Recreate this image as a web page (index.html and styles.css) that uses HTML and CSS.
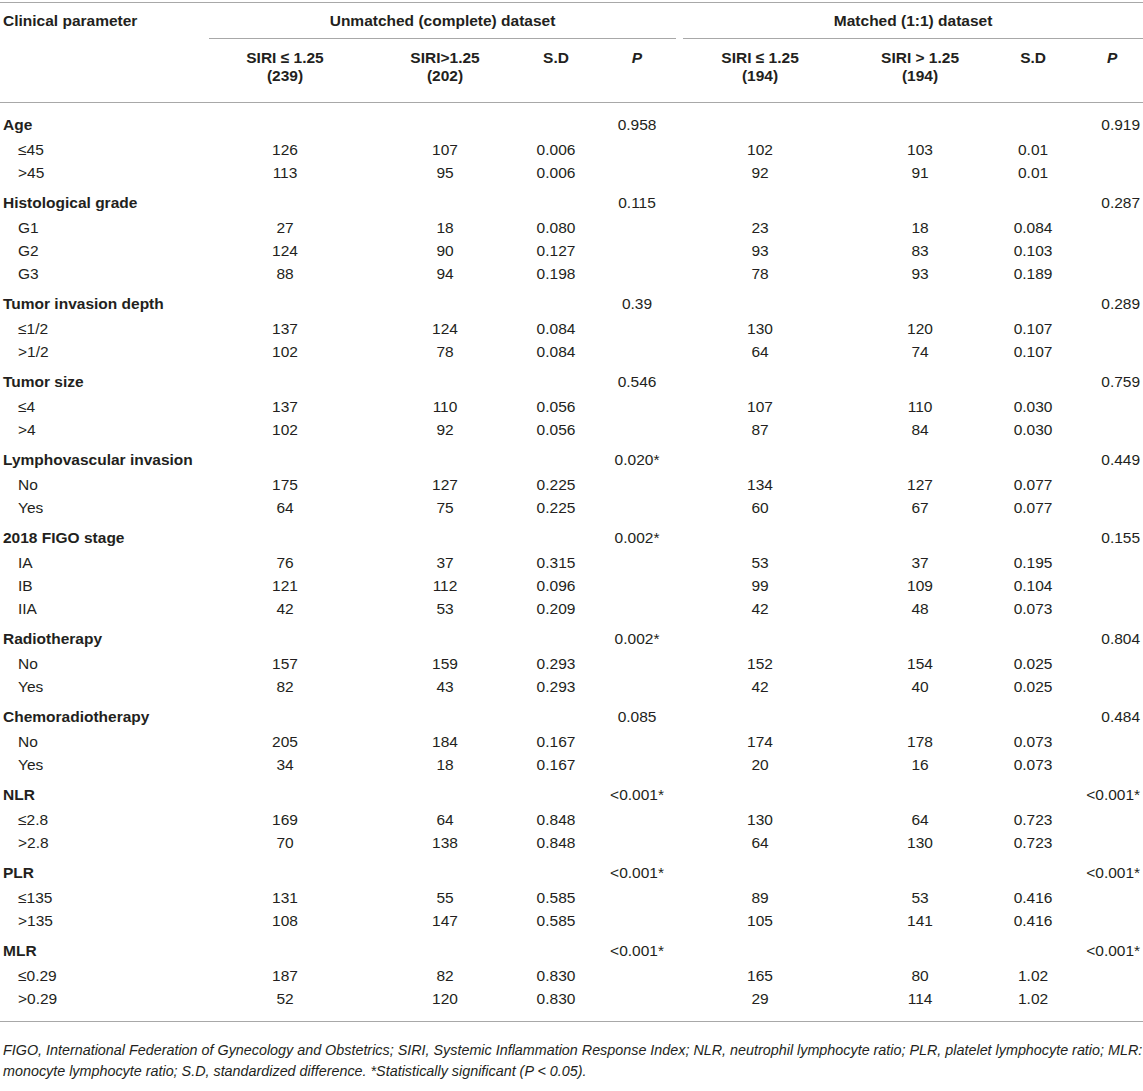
FILE: index.html
```html
<!DOCTYPE html>
<html>
<head>
<meta charset="utf-8">
<link rel="stylesheet" href="styles.css">
</head>
<body>
<table class="tbl">
  <colgroup>
    <col class="w1"><col class="w2"><col class="w3"><col class="w4"><col class="w5">
    <col class="w6"><col class="w7"><col class="w8"><col class="w9">
  </colgroup>
  <thead>
    <tr class="h1">
      <th rowspan="2" class="param">Clinical parameter</th>
      <th colspan="4" class="grp"><div class="grp-l">Unmatched (complete) dataset</div></th>
      <th colspan="4" class="grp"><div class="grp-r">Matched (1:1) dataset</div></th>
    </tr>
    <tr class="h2">
      <th>SIRI ≤ 1.25<br>(239)</th>
      <th>SIRI&gt;1.25<br>(202)</th>
      <th>S.D</th>
      <th class="p1"><i>P</i></th>
      <th>SIRI ≤ 1.25<br>(194)</th>
      <th>SIRI &gt; 1.25<br>(194)</th>
      <th>S.D</th>
      <th class="p2h"><i>P</i></th>
    </tr>
  </thead>
  <tbody>
    <tr class="cat first"><td class="lab">Age</td><td></td><td></td><td></td><td class="p1">0.958</td><td></td><td></td><td></td><td class="p2">0.919</td></tr>
    <tr class="sub"><td class="lab">≤45</td><td>126</td><td>107</td><td>0.006</td><td class="p1"></td><td>102</td><td>103</td><td>0.01</td><td class="p2"></td></tr>
    <tr class="sub"><td class="lab">&gt;45</td><td>113</td><td>95</td><td>0.006</td><td class="p1"></td><td>92</td><td>91</td><td>0.01</td><td class="p2"></td></tr>

    <tr class="cat"><td class="lab">Histological grade</td><td></td><td></td><td></td><td class="p1">0.115</td><td></td><td></td><td></td><td class="p2">0.287</td></tr>
    <tr class="sub"><td class="lab">G1</td><td>27</td><td>18</td><td>0.080</td><td class="p1"></td><td>23</td><td>18</td><td>0.084</td><td class="p2"></td></tr>
    <tr class="sub"><td class="lab">G2</td><td>124</td><td>90</td><td>0.127</td><td class="p1"></td><td>93</td><td>83</td><td>0.103</td><td class="p2"></td></tr>
    <tr class="sub"><td class="lab">G3</td><td>88</td><td>94</td><td>0.198</td><td class="p1"></td><td>78</td><td>93</td><td>0.189</td><td class="p2"></td></tr>

    <tr class="cat"><td class="lab">Tumor invasion depth</td><td></td><td></td><td></td><td class="p1">0.39</td><td></td><td></td><td></td><td class="p2">0.289</td></tr>
    <tr class="sub"><td class="lab">≤1/2</td><td>137</td><td>124</td><td>0.084</td><td class="p1"></td><td>130</td><td>120</td><td>0.107</td><td class="p2"></td></tr>
    <tr class="sub"><td class="lab">&gt;1/2</td><td>102</td><td>78</td><td>0.084</td><td class="p1"></td><td>64</td><td>74</td><td>0.107</td><td class="p2"></td></tr>

    <tr class="cat"><td class="lab">Tumor size</td><td></td><td></td><td></td><td class="p1">0.546</td><td></td><td></td><td></td><td class="p2">0.759</td></tr>
    <tr class="sub"><td class="lab">≤4</td><td>137</td><td>110</td><td>0.056</td><td class="p1"></td><td>107</td><td>110</td><td>0.030</td><td class="p2"></td></tr>
    <tr class="sub"><td class="lab">&gt;4</td><td>102</td><td>92</td><td>0.056</td><td class="p1"></td><td>87</td><td>84</td><td>0.030</td><td class="p2"></td></tr>

    <tr class="cat"><td class="lab">Lymphovascular invasion</td><td></td><td></td><td></td><td class="p1">0.020*</td><td></td><td></td><td></td><td class="p2">0.449</td></tr>
    <tr class="sub"><td class="lab">No</td><td>175</td><td>127</td><td>0.225</td><td class="p1"></td><td>134</td><td>127</td><td>0.077</td><td class="p2"></td></tr>
    <tr class="sub"><td class="lab">Yes</td><td>64</td><td>75</td><td>0.225</td><td class="p1"></td><td>60</td><td>67</td><td>0.077</td><td class="p2"></td></tr>

    <tr class="cat"><td class="lab">2018 FIGO stage</td><td></td><td></td><td></td><td class="p1">0.002*</td><td></td><td></td><td></td><td class="p2">0.155</td></tr>
    <tr class="sub"><td class="lab">IA</td><td>76</td><td>37</td><td>0.315</td><td class="p1"></td><td>53</td><td>37</td><td>0.195</td><td class="p2"></td></tr>
    <tr class="sub"><td class="lab">IB</td><td>121</td><td>112</td><td>0.096</td><td class="p1"></td><td>99</td><td>109</td><td>0.104</td><td class="p2"></td></tr>
    <tr class="sub"><td class="lab">IIA</td><td>42</td><td>53</td><td>0.209</td><td class="p1"></td><td>42</td><td>48</td><td>0.073</td><td class="p2"></td></tr>

    <tr class="cat"><td class="lab">Radiotherapy</td><td></td><td></td><td></td><td class="p1">0.002*</td><td></td><td></td><td></td><td class="p2">0.804</td></tr>
    <tr class="sub"><td class="lab">No</td><td>157</td><td>159</td><td>0.293</td><td class="p1"></td><td>152</td><td>154</td><td>0.025</td><td class="p2"></td></tr>
    <tr class="sub"><td class="lab">Yes</td><td>82</td><td>43</td><td>0.293</td><td class="p1"></td><td>42</td><td>40</td><td>0.025</td><td class="p2"></td></tr>

    <tr class="cat"><td class="lab">Chemoradiotherapy</td><td></td><td></td><td></td><td class="p1">0.085</td><td></td><td></td><td></td><td class="p2">0.484</td></tr>
    <tr class="sub"><td class="lab">No</td><td>205</td><td>184</td><td>0.167</td><td class="p1"></td><td>174</td><td>178</td><td>0.073</td><td class="p2"></td></tr>
    <tr class="sub"><td class="lab">Yes</td><td>34</td><td>18</td><td>0.167</td><td class="p1"></td><td>20</td><td>16</td><td>0.073</td><td class="p2"></td></tr>

    <tr class="cat"><td class="lab">NLR</td><td></td><td></td><td></td><td class="p1">&lt;0.001*</td><td></td><td></td><td></td><td class="p2">&lt;0.001*</td></tr>
    <tr class="sub"><td class="lab">≤2.8</td><td>169</td><td>64</td><td>0.848</td><td class="p1"></td><td>130</td><td>64</td><td>0.723</td><td class="p2"></td></tr>
    <tr class="sub"><td class="lab">&gt;2.8</td><td>70</td><td>138</td><td>0.848</td><td class="p1"></td><td>64</td><td>130</td><td>0.723</td><td class="p2"></td></tr>

    <tr class="cat"><td class="lab">PLR</td><td></td><td></td><td></td><td class="p1">&lt;0.001*</td><td></td><td></td><td></td><td class="p2">&lt;0.001*</td></tr>
    <tr class="sub"><td class="lab">≤135</td><td>131</td><td>55</td><td>0.585</td><td class="p1"></td><td>89</td><td>53</td><td>0.416</td><td class="p2"></td></tr>
    <tr class="sub"><td class="lab">&gt;135</td><td>108</td><td>147</td><td>0.585</td><td class="p1"></td><td>105</td><td>141</td><td>0.416</td><td class="p2"></td></tr>

    <tr class="cat"><td class="lab">MLR</td><td></td><td></td><td></td><td class="p1">&lt;0.001*</td><td></td><td></td><td></td><td class="p2">&lt;0.001*</td></tr>
    <tr class="sub"><td class="lab">≤0.29</td><td>187</td><td>82</td><td>0.830</td><td class="p1"></td><td>165</td><td>80</td><td>1.02</td><td class="p2"></td></tr>
    <tr class="sub last"><td class="lab">&gt;0.29</td><td>52</td><td>120</td><td>0.830</td><td class="p1"></td><td>29</td><td>114</td><td>1.02</td><td class="p2"></td></tr>
  </tbody>
</table>
<p class="note">FIGO, International Federation of Gynecology and Obstetrics; SIRI, Systemic Inflammation Response Index; NLR, neutrophil lymphocyte ratio; PLR, platelet lymphocyte ratio; MLR:<br>monocyte lymphocyte ratio; S.D, standardized difference. *Statistically significant (P &lt; 0.05).</p>
</body>
</html>
```

FILE: styles.css
```css
html, body {
  margin: 0;
  padding: 0;
  background: #ffffff;
}

body {
  padding-top: 2px;
  font-family: "Liberation Sans", Arial, sans-serif;
  color: #231f20;
  font-size: 15.5px;
}

.tbl {
  width: 1143px;
  table-layout: fixed;
  border-collapse: collapse;
  border-top: 1px solid #a8a8a8;
  border-bottom: 1px solid #a8a8a8;
}

.w1 { width: 209px; }
.w2 { width: 152px; }
.w3 { width: 168px; }
.w4 { width: 54px; }
.w5 { width: 97px; }
.w6 { width: 160px; }
.w7 { width: 160px; }
.w8 { width: 66px; }
.w9 { width: 77px; }

th, td {
  padding: 0;
  white-space: nowrap;
  line-height: 18px;
  text-align: center;
  font-weight: normal;
}

thead th {
  font-weight: bold;
}

thead {
  border-bottom: 1px solid #a8a8a8;
}

.h1 th.param {
  text-align: left;
  vertical-align: top;
  padding: 9px 0 0 3px;
}

.grp-l, .grp-r {
  padding: 9px 0 8px;
  border-bottom: 1px solid #a8a8a8;
}

.grp-l { margin-right: 4px; }
.grp-r { margin-left: 3px; }

.h2 th {
  vertical-align: top;
  padding: 10px 0 17px;
}

.h2 th.p1, td.p1 {
  padding-left: 11px;
}

.h2 th.p2h {
  padding-left: 15px;
}

td.p2 {
  text-align: right;
  padding-right: 3px;
}

td.lab {
  text-align: left;
  padding-left: 18px;
}

tr.cat td.lab {
  padding-left: 3px;
  font-weight: bold;
}

tr.sub td {
  padding-top: 2.5px;
  padding-bottom: 2.5px;
}

tr.cat td {
  padding-top: 9.5px;
  padding-bottom: 4.5px;
}

tr.cat.first td {
  padding-top: 13px;
}

tr.sub.last td {
  padding-bottom: 13px;
}

.note {
  margin: 18px 0 0 3px;
  font-style: italic;
  font-size: 14.35px;
  line-height: 21px;
  white-space: nowrap;
}
```
